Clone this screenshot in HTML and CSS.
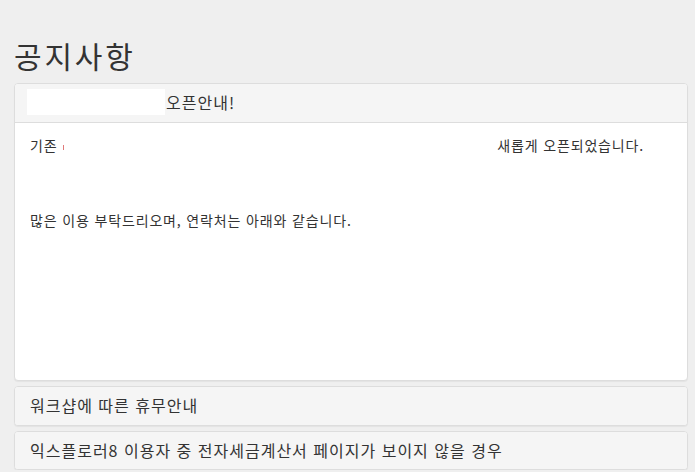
FILE: index.html
```html
<!DOCTYPE html>
<html lang="ko">
<head>
<meta charset="utf-8">
<title>공지사항</title>
<link rel="stylesheet" href="styles.css">
</head>
<body>
<div class="page">
  <h2 class="page-title">공지사항</h2>
  <div class="panel-group">
    <div class="panel">
      <div class="panel-heading panel-heading-open">
        <span class="redact-box"></span><span class="panel-title">오픈안내!</span>
      </div>
      <div class="panel-body">
        <p class="notice-line">기존 <span class="red-mark"></span><span class="redact-gap"></span>새롭게 오픈되었습니다.</p>
        <p class="notice-line notice-later">많은 이용 부탁드리오며, 연락처는 아래와 같습니다.</p>
      </div>
    </div>
    <div class="panel">
      <div class="panel-heading">
        <span class="panel-title">워크샵에 따른 휴무안내</span>
      </div>
    </div>
    <div class="panel">
      <div class="panel-heading">
        <span class="panel-title">익스플로러8 이용자 중 전자세금계산서 페이지가 보이지 않을 경우</span>
      </div>
    </div>
  </div>
</div>
</body>
</html>
```

FILE: styles.css
```css
html, body {
  margin: 0;
  padding: 0;
  background: #efefef;
}

body {
  font-family: "Noto Sans CJK KR", "Noto Sans", sans-serif;
  font-size: 14px;
  line-height: 20px;
  color: #333333;
}

.page {
  padding: 0 7px 0 14px;
}

.page-title {
  margin: 39px 0 11px;
  font-size: 30px;
  font-weight: 400;
  line-height: 33px;
  letter-spacing: 2.8px;
  color: #333333;
}

.panel-group {
  display: flex;
  flex-direction: column;
  gap: 5px;
}

.panel {
  background: #ffffff;
  border: 1px solid #dddddd;
  border-radius: 4px;
  box-shadow: 0 1px 1px rgba(0, 0, 0, 0.05);
  overflow: hidden;
}

.panel-heading {
  display: flex;
  align-items: center;
  padding: 10px 15px;
  background: #f5f5f5;
}

.panel-title {
  font-size: 16px;
  line-height: 17.6px;
  letter-spacing: 1px;
  color: #333333;
}

.redact-box {
  display: block;
  width: 138px;
  height: 26px;
  margin: -5px 1px -3px -3px;
  background: #ffffff;
}

.panel-body {
  box-sizing: border-box;
  min-height: 258px;
  padding: 12px 15px 15px;
  border-top: 1px solid #dddddd;
}

.notice-line {
  margin: 0;
  letter-spacing: 0.85px;
}

.notice-later {
  margin-top: 55px;
}

.red-mark {
  display: inline-block;
  width: 1px;
  height: 5px;
  margin-left: 1px;
  background: #e07a7a;
  vertical-align: 1px;
}

.redact-gap {
  display: inline-block;
  width: 433px;
}
```
